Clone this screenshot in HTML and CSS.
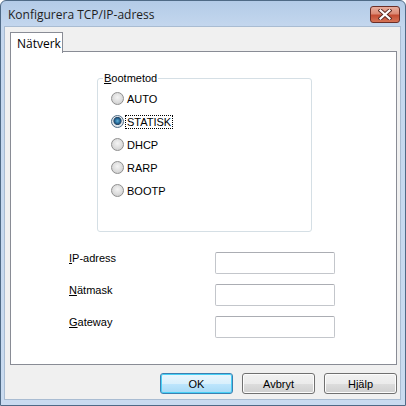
FILE: index.html
```html
<!DOCTYPE html>
<html lang="sv">
<head>
    <meta charset="UTF-8">
    <title>Konfigurera TCP/IP-adress</title>
    <link rel="stylesheet" href="styles.css">
</head>
<body>
    <div class="window">
        <div class="titlebar">
            <span class="title">Konfigurera TCP/IP-adress</span>
            <button class="close" aria-label="Stäng">
                <svg width="14" height="11" viewBox="0 0 14 11">
                    <path d="M2.5 1.5 L11.5 9.5 M11.5 1.5 L2.5 9.5" stroke="#5a2a22" stroke-width="4" stroke-linecap="square" fill="none"/>
                    <path d="M2.5 1.5 L11.5 9.5 M11.5 1.5 L2.5 9.5" stroke="#ffffff" stroke-width="2.2" stroke-linecap="square" fill="none"/>
                </svg>
            </button>
        </div>
        <div class="client">
            <div class="tabs">
                <div class="tab">Nätverk</div>
            </div>
            <div class="panel">
                <fieldset class="group">
                    <legend><u>B</u>ootmetod</legend>
                    <label class="option"><span class="radio"></span><span class="text">AUTO</span></label>
                    <label class="option"><span class="radio checked"></span><span class="text focused">STATISK</span></label>
                    <label class="option"><span class="radio"></span><span class="text">DHCP</span></label>
                    <label class="option"><span class="radio"></span><span class="text">RARP</span></label>
                    <label class="option"><span class="radio"></span><span class="text">BOOTP</span></label>
                </fieldset>
                <div class="fields">
                    <label class="field-label"><u>I</u>P-adress</label>
                    <input type="text" class="field-input">
                    <label class="field-label"><u>N</u>ätmask</label>
                    <input type="text" class="field-input">
                    <label class="field-label"><u>G</u>ateway</label>
                    <input type="text" class="field-input">
                </div>
            </div>
            <div class="buttons">
                <button class="btn default">OK</button>
                <button class="btn">Avbryt</button>
                <button class="btn">Hjälp</button>
            </div>
        </div>
    </div>
</body>
</html>
```
FILE: styles.css
```css
body {
    margin: 0;
    padding: 0;
    background-color: #ffffff;
    font-family: "Liberation Sans", Arial, sans-serif;
    font-size: 11px;
    color: #000000;
}
.window {
    width: 406px;
    height: 406px;
    box-sizing: border-box;
    border: 1px solid #4f6a86;
    border-radius: 6px 6px 0 0;
    background: linear-gradient(to bottom, #b3cbe7 0px, #c4d7ee 26px, #c9dbf0 100%);
    padding: 0 4px 5px 3px;
    display: flex;
    flex-direction: column;
}
.titlebar {
    height: 25px;
    display: flex;
    align-items: center;
    justify-content: space-between;
    padding: 0 1px 0 4px;
}
.title {
    font-family: "Open Sans", sans-serif;
    font-size: 12px;
    color: #1e1e1e;
    margin-top: 2px;
}
.close {
    width: 30px;
    height: 17px;
    margin-top: 2px;
    border: 1px solid #6b2e27;
    border-radius: 3px;
    background: linear-gradient(to bottom, #e8ad9d 0%, #dc8a75 45%, #c44c33 55%, #d57457 100%);
    display: flex;
    align-items: center;
    justify-content: center;
    padding: 0;
}
.client {
    flex: 1;
    background-color: #f0f0f0;
    border: 1px solid #a9bcd2;
    padding: 5px 3px 5px 5px;
    display: flex;
    flex-direction: column;
}
.tabs {
    display: flex;
    height: 20px;
    position: relative;
    z-index: 1;
    margin-bottom: -1px;
}
.tab {
    width: 53px;
    box-sizing: border-box;
    background-color: #ffffff;
    border: 1px solid #898c95;
    border-bottom: none;
    font-family: "Open Sans", sans-serif;
    font-size: 12px;
    padding: 2px 0 0 6px;
    height: 21px;
}
.panel {
    height: 314px;
    box-sizing: border-box;
    background-color: #ffffff;
    border: 1px solid #898c95;
    width: 387px;
    padding-top: 20px;
}
.group {
    margin: 0 0 0 86px;
    width: 215px;
    height: 160px;
    box-sizing: border-box;
    border: 1px solid #d5dfe5;
    border-radius: 3px;
    padding: 7px 0 0 13px;
    display: flex;
    flex-direction: column;
    gap: 10px;
}
.group legend {
    padding: 0 1px;
    margin-left: -8px;
    line-height: 13px;
}
.option {
    display: flex;
    align-items: center;
    height: 13px;
}
.radio {
    width: 11px;
    height: 11px;
    border: 1px solid #8f8f8f;
    border-radius: 50%;
    background: radial-gradient(circle at 50% 40%, #f4f4f4 0%, #dcdcdc 55%, #c8c8c8 100%);
    margin-right: 1px;
}
.radio.checked {
    border-color: #4d6b85;
    background: radial-gradient(circle at 50% 45%, #5fb3dc 0%, #1d5a88 35%, #2d4a66 45%, #e4e9ee 55%, #cfd6dc 100%);
}
.text {
    padding: 0 1px;
    border: 1px dotted transparent;
}
.text.focused {
    border-color: #000000;
}
.fields {
    display: grid;
    grid-template-columns: 146px 120px;
    row-gap: 10px;
    margin: 20px 0 0 58px;
    align-items: center;
}
.field-label {
    padding-bottom: 10px;
}
.field-input {
    height: 22px;
    box-sizing: border-box;
    border: 1px solid #c3c6cb;
    border-top-color: #abadb3;
    border-radius: 2px;
    background-color: #ffffff;
    margin: 0;
}
.buttons {
    display: flex;
    justify-content: flex-end;
    gap: 9px;
    margin-top: 8px;
}
.btn {
    width: 73px;
    height: 21px;
    box-sizing: border-box;
    border: 1px solid #707070;
    border-radius: 3px;
    background: linear-gradient(to bottom, #f2f2f2 0%, #ebebeb 50%, #dddddd 51%, #cfcfcf 100%);
    box-shadow: inset 0 0 0 1px #fcfcfc;
    font-family: "Liberation Sans", Arial, sans-serif;
    font-size: 11px;
    color: #000000;
    padding: 0;
}
.btn.default {
    border-color: #3c7fb1;
    background: linear-gradient(to bottom, #eaf6fd 0%, #d9f0fc 50%, #bee6fd 51%, #a7d9f5 100%);
    box-shadow: inset 0 0 0 1px #48d0f6;
}
```
